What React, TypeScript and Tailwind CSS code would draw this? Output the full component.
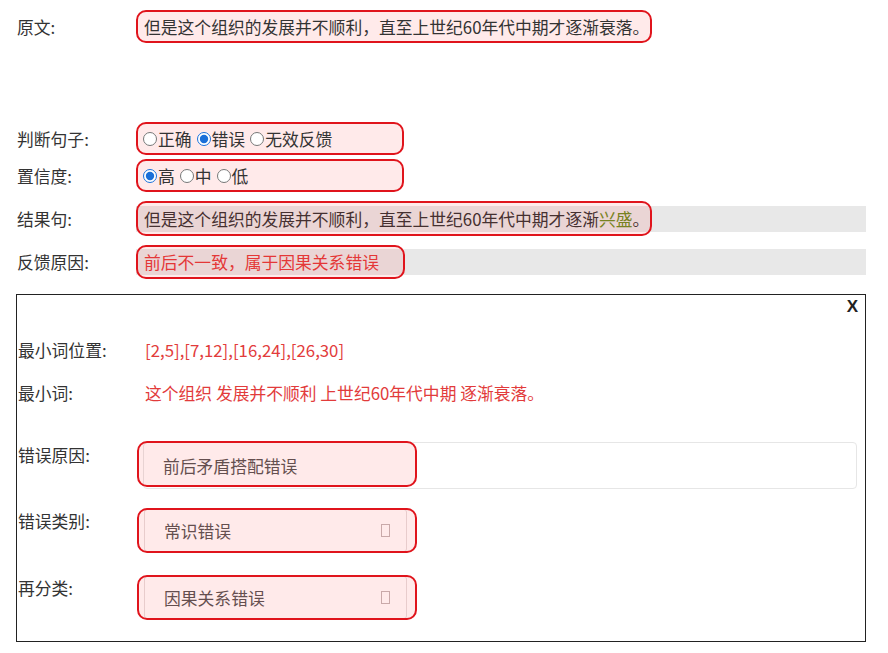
import * as React from 'react';

const FONT = "font-['Noto_Sans_CJK_SC','Noto_Sans',sans-serif]";

// red rounded annotation drawn over a field
function Mark({ className }: { className: string }) {
  return (
    <span
      className={`pointer-events-none absolute rounded-[10px] border-2 border-[#e0141c] bg-[#ff1a1a]/[0.09] ${className}`}
    />
  );
}

function Radio({ label, checked }: { label: string; checked?: boolean }) {
  return (
    <label className="flex items-center">
      <input
        type="radio"
        defaultChecked={checked}
        className="m-0 mr-[1px] h-[14px] w-[14px] accent-[#1a6fd8]"
      />
      <span>{label}</span>
    </label>
  );
}

function Tofu() {
  return <span className="inline-block h-[13px] w-[9px] border border-[#c4b8b8]" />;
}

function Select({ value }: { value: string }) {
  return (
    <div className="relative h-[43px] w-[263px]">
      <div className="flex h-full w-full items-center justify-between rounded-[3px] border border-[#e6dede] bg-white pl-[19px] pr-[16px] text-[#555]">
        <span>{value}</span>
        <Tofu />
      </div>
      <Mark className="-left-[7px] -top-[1px] h-[45px] w-[280px]" />
    </div>
  );
}

export default function App() {
  return (
    <div className={`${FONT} ml-[16px] w-[850px] text-[16.8px] leading-[24px] text-[#333]`}>
      {/* 原文 */}
      <div className="mt-[10px] flex items-center">
        <div className="w-[120px] pl-[1px]">原文:</div>
        <div className="flex h-[33px] w-[516px] items-center rounded-[10px] border-2 border-[#e0141c] bg-[#ff1a1a]/[0.09] pl-[6px]">
          但是这个组织的发展并不顺利，直至上世纪60年代中期才逐渐衰落。
        </div>
      </div>

      {/* 判断句子 */}
      <div className="mt-[79px] flex items-center">
        <div className="w-[120px] pl-[1px]">判断句子:</div>
        <div className="flex h-[33px] w-[268px] items-center gap-[5px] rounded-[10px] border-2 border-[#e0141c] bg-[#ff1a1a]/[0.09] pl-[5px]">
          <Radio label="正确" />
          <Radio label="错误" checked />
          <Radio label="无效反馈" />
        </div>
      </div>

      {/* 置信度 */}
      <div className="mt-[4px] flex items-center">
        <div className="w-[120px] pl-[1px]">置信度:</div>
        <div className="flex h-[33px] w-[268px] items-center gap-[5px] rounded-[10px] border-2 border-[#e0141c] bg-[#ff1a1a]/[0.09] pl-[5px]">
          <Radio label="高" checked />
          <Radio label="中" />
          <Radio label="低" />
        </div>
      </div>

      {/* 结果句 */}
      <div className="mt-[14px] flex items-center">
        <div className="w-[120px] pl-[1px]">结果句:</div>
        <div className="relative flex h-[26px] flex-1 items-center bg-[#e8e8e8] pl-[8px]">
          <span>
            但是这个组织的发展并不顺利，直至上世纪60年代中期才逐渐
            <span className="text-[#6b8e23]">兴盛</span>。
          </span>
          <Mark className="-top-[5px] left-0 h-[35px] w-[516px]" />
        </div>
      </div>

      {/* 反馈原因 */}
      <div className="mt-[17px] flex items-center">
        <div className="w-[120px] pl-[1px]">反馈原因:</div>
        <div className="relative flex h-[26px] flex-1 items-center bg-[#e8e8e8] pl-[8px] text-[#e23b3b]">
          前后不一致，属于因果关系错误
          <Mark className="-top-[4px] left-0 h-[34px] w-[269px]" />
        </div>
      </div>

      {/* detail box */}
      <div className="mt-[19px] border border-[#222] pb-[22px] pl-[1px]">
        <div className="flex justify-end pr-[7px] pt-[2px]">
          <span className="font-['Liberation_Sans',sans-serif] text-[17px] font-bold leading-[20px] text-[#222]">X</span>
        </div>

        <div className="mt-[21px] flex items-center">
          <div className="w-[125px]">最小词位置:</div>
          <div className="pl-[2px] text-[#e23b3b]">[2,5],[7,12],[16,24],[26,30]</div>
        </div>

        <div className="mt-[19px] flex items-center">
          <div className="w-[125px]">最小词:</div>
          <div className="pl-[2px] text-[#e23b3b]">这个组织 发展并不顺利 上世纪60年代中期 逐渐衰落。</div>
        </div>

        <div className="mt-[37px] flex items-start">
          <div className="w-[125px] pt-[1px]">错误原因:</div>
          <div className="relative h-[47px] w-[714px]">
            <div className="flex h-full w-full items-center rounded-[4px] border border-[#e6e6e6] pl-[19px] text-[#555]">
              前后矛盾搭配错误
            </div>
            <Mark className="-left-[6px] -top-[1px] h-[46px] w-[280px]" />
          </div>
        </div>

        <div className="mt-[20px] flex items-start">
          <div className="w-[125px]">错误类别:</div>
          <div className="pl-[1px]">
            <Select value="常识错误" />
          </div>
        </div>

        <div className="mt-[24px] flex items-start">
          <div className="w-[125px]">再分类:</div>
          <div className="pl-[1px]">
            <Select value="因果关系错误" />
          </div>
        </div>
      </div>
    </div>
  );
}
